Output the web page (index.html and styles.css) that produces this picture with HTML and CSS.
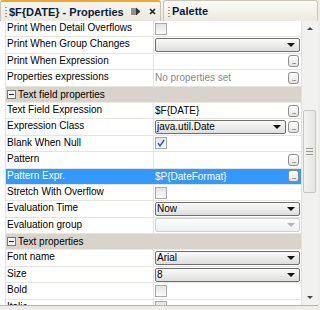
FILE: index.html
```html
<!DOCTYPE html>
<html lang="en">
<head>
  <meta charset="UTF-8">
  <title>Properties</title>
  <link rel="stylesheet" href="styles.css">
</head>
<body>

  <div id="panel">
    <div class="tabs">
      <div class="tab active">
        <span class="grip"></span>
        <span class="tab-title">$F{DATE} - Properties</span>
        <span class="tab-icons">
          <svg width="10" height="9" viewBox="0 0 10 9"><path d="M1 1v7M3 1v7M5 1l4 3.5L5 8z" fill="#333" stroke="#333" stroke-width="1"/></svg>
          <svg width="7" height="7" viewBox="0 0 7 7"><path d="M1 1l5 5M6 1l-5 5" stroke="#222" stroke-width="1.6"/></svg>
        </span>
      </div>
      <div class="tab">
        <span class="grip"></span>
        <span class="tab-title">Palette</span>
      </div>
    </div>

    <div class="sheet">
      <div class="rows">
        <div class="row"><div class="label">Print When Detail Overflows</div><div class="value"><span class="check"></span></div></div>
        <div class="row"><div class="label">Print When Group Changes</div><div class="value"><span class="combo"><span class="combo-text"></span><span class="arrow"></span></span></div></div>
        <div class="row"><div class="label">Print When Expression</div><div class="value"><span class="text"></span><span class="dots">...</span></div></div>
        <div class="row"><div class="label">Properties expressions</div><div class="value"><span class="text muted">No properties set</span><span class="dots">...</span></div></div>
        <div class="group"><span class="minus"></span>Text field properties</div>
        <div class="row"><div class="label">Text Field Expression</div><div class="value"><span class="text">$F{DATE}</span><span class="dots">...</span></div></div>
        <div class="row"><div class="label">Expression Class</div><div class="value"><span class="combo short"><span class="combo-text">java.util.Date</span><span class="arrow"></span></span><span class="dots">...</span></div></div>
        <div class="row"><div class="label">Blank When Null</div><div class="value"><span class="check on"><svg width="10" height="10" viewBox="0 0 10 10"><path d="M2 5l2 3 4-6" fill="none" stroke="#3a55b0" stroke-width="1.4"/></svg></span></div></div>
        <div class="row"><div class="label">Pattern</div><div class="value"><span class="text"></span><span class="dots">...</span></div></div>
        <div class="row selected"><div class="label">Pattern Expr.</div><div class="value"><span class="text">$P{DateFormat}</span><span class="dots">...</span></div></div>
        <div class="row"><div class="label">Stretch With Overflow</div><div class="value"><span class="check"></span></div></div>
        <div class="row"><div class="label">Evaluation Time</div><div class="value"><span class="combo"><span class="combo-text">Now</span><span class="arrow"></span></span></div></div>
        <div class="row"><div class="label">Evaluation group</div><div class="value"><span class="combo disabled"><span class="combo-text"></span><span class="arrow"></span></span></div></div>
        <div class="group"><span class="minus"></span>Text properties</div>
        <div class="row"><div class="label">Font name</div><div class="value"><span class="combo"><span class="combo-text">Arial</span><span class="arrow"></span></span></div></div>
        <div class="row"><div class="label">Size</div><div class="value"><span class="combo"><span class="combo-text">8</span><span class="arrow"></span></span></div></div>
        <div class="row"><div class="label">Bold</div><div class="value"><span class="check"></span></div></div>
        <div class="row"><div class="label">Italic</div><div class="value"><span class="check"></span></div></div>
      </div>

      <div class="scrollbar">
        <span class="sb-arrow up"></span>
        <div class="track">
          <div class="thumb"><span class="thumb-grip"></span></div>
        </div>
        <span class="sb-arrow down"></span>
      </div>
    </div>
  </div>

</body>
</html>
```

FILE: styles.css
```css
body {
  margin: 0;
  background-color: #eeece6;
  font-family: "Liberation Sans", Arial, sans-serif;
  font-size: 10px;
  color: #000;
}

#panel {
  width: 318px;
  height: 306px;
  display: flex;
  flex-direction: column;
}

/* tab strip */
.tabs {
  height: 21px;
  display: flex;
  background: linear-gradient(#f6f4ee, #e8e5db);
  box-sizing: border-box;
}

.tab {
  display: flex;
  align-items: center;
  height: 21px;
  box-sizing: border-box;
  padding-left: 4px;
  border: 1px solid #c9c5b8;
  border-bottom: none;
  border-radius: 3px 3px 0 0;
  background: linear-gradient(#fbfaf6, #ece9df);
}

.tab.active {
  width: 161px;
  border-top: 2px solid #f0a830;
  background: linear-gradient(#f7f6f1, #ebe8df);
}

.tab + .tab {
  flex: 1;
  margin-left: 2px;
}

.grip {
  width: 2px;
  height: 11px;
  margin-right: 2px;
  background-image: radial-gradient(circle, #9a978c 0.7px, transparent 0.8px);
  background-size: 2px 3px;
}

.tab-title {
  font-weight: bold;
  font-size: 11px;
  color: #0c1b3a;
}

.tab-icons {
  margin-left: auto;
  display: flex;
  align-items: center;
  gap: 8px;
  padding-right: 4px;
}

/* sheet */
.sheet {
  flex: 1;
  display: flex;
  border-bottom: 1px solid #b8b4a8;
  background: #fff;
  overflow: hidden;
}

.rows {
  flex: 1;
  overflow: hidden;
  border-left: 1px solid #e2e0da;
  margin-left: 5px;
}

.row {
  display: flex;
  height: 16.4px;
  box-sizing: border-box;
  border-bottom: 1px solid #e6e4de;
}

.label {
  width: 146px;
  padding-left: 1px;
  line-height: 14px;
  border-right: 1px solid #e6e4de;
  white-space: nowrap;
  overflow: hidden;
}

.value {
  flex: 1;
  display: flex;
  align-items: center;
  padding-left: 1px;
  padding-right: 1px;
}

.row.selected {
  background: #3399ff;
  color: #fff;
}

.row.selected .label {
  border-right-color: #3399ff;
}

.text {
  flex: 1;
  white-space: nowrap;
}

.text.muted {
  color: #8a8a8a;
}

.dots {
  width: 11px;
  height: 12px;
  box-sizing: border-box;
  border: 1px solid #8d8d8d;
  border-radius: 3px;
  background: linear-gradient(#ffffff, #e4e4e4);
  color: #333;
  font-size: 8px;
  line-height: 11px;
  text-align: center;
  letter-spacing: -1px;
  margin-right: 1px;
}

.check {
  width: 12px;
  height: 12px;
  box-sizing: border-box;
  border: 1px solid #a9a9a9;
  background: linear-gradient(#e4e4e4, #fafafa);
  display: flex;
  align-items: center;
  justify-content: center;
}

.combo {
  flex: 1;
  height: 14px;
  box-sizing: border-box;
  display: flex;
  align-items: center;
  border: 1px solid #6f6f6f;
  border-radius: 2px;
  background: linear-gradient(#fafafa, #dedede);
}

.combo.short {
  margin-right: 2px;
}

.combo.disabled {
  border-color: #cfcfcf;
  background: linear-gradient(#fcfcfc, #efefef);
}

.combo-text {
  flex: 1;
  padding-left: 1px;
  line-height: 12px;
}

.arrow {
  width: 0;
  height: 0;
  margin-right: 4px;
  border-left: 4px solid transparent;
  border-right: 4px solid transparent;
  border-top: 4px solid #111;
}

.combo.disabled .arrow {
  border-top-color: #b4b4b4;
}

.group {
  display: flex;
  align-items: center;
  height: 16.4px;
  box-sizing: border-box;
  background: #d8d4cb;
  border-bottom: 1px solid #ebe9e3;
  padding-left: 1px;
}

.minus {
  width: 9px;
  height: 9px;
  box-sizing: border-box;
  border: 1px solid #777;
  background: #f4f4f4;
  margin-right: 2px;
  position: relative;
}

.minus::after {
  content: "";
  position: absolute;
  left: 1px;
  right: 1px;
  top: 3px;
  height: 1px;
  background: #222;
}

/* scrollbar */
.scrollbar {
  width: 16px;
  display: flex;
  flex-direction: column;
  align-items: center;
  background: #f1f1ef;
  border-left: 1px solid #e3e1dc;
}

.sb-arrow {
  width: 0;
  height: 0;
  margin: 6px 0;
  border-left: 3px solid transparent;
  border-right: 3px solid transparent;
}

.sb-arrow.up {
  border-bottom: 3px solid #444;
}

.sb-arrow.down {
  border-top: 3px solid #444;
}

.track {
  flex: 1;
  width: 100%;
  padding-top: 74px;
}

.thumb {
  width: 13px;
  height: 83px;
  margin-left: 1px;
  box-sizing: border-box;
  border: 1px solid #c6c6c2;
  border-radius: 2px;
  background: linear-gradient(90deg, #f3f3f1, #e5e5e2);
  display: flex;
  align-items: center;
  justify-content: center;
}

.thumb-grip {
  width: 7px;
  height: 5px;
  border-top: 1px solid #999;
  border-bottom: 1px solid #999;
  position: relative;
}

.thumb-grip::after {
  content: "";
  position: absolute;
  left: 0;
  right: 0;
  top: 2px;
  height: 1px;
  background: #999;
}
```
